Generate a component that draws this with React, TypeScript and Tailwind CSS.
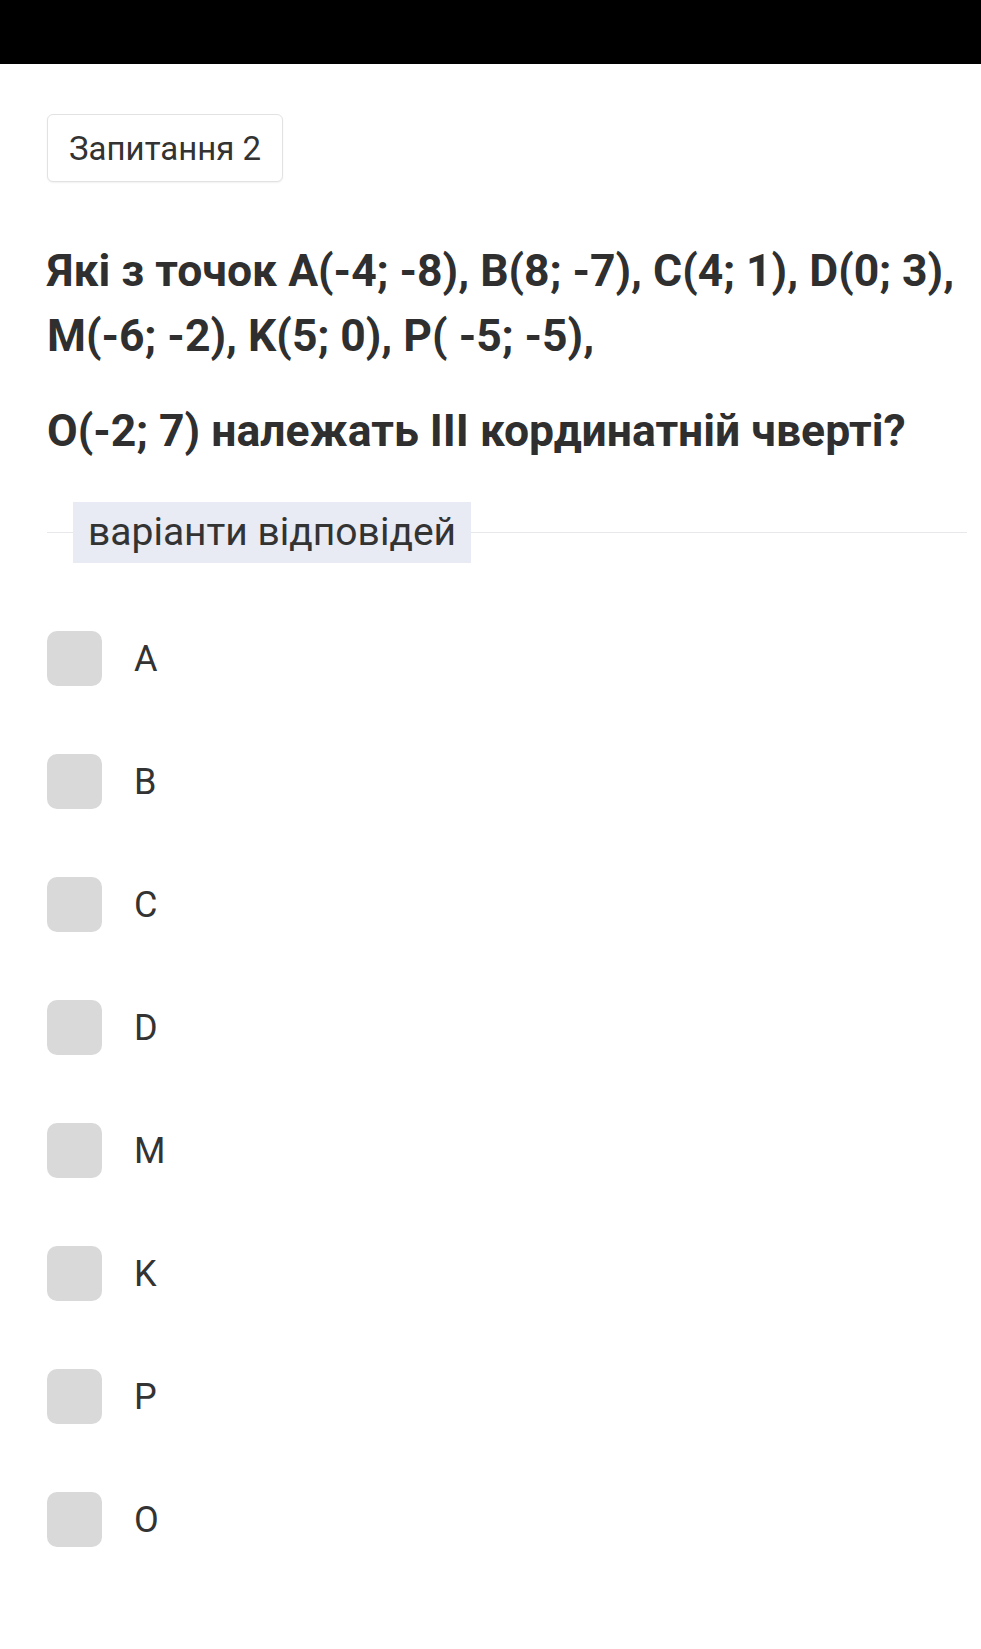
import React from 'react';

const options = ['A', 'B', 'C', 'D', 'M', 'K', 'P', 'O'];

const App: React.FC = () => {
  return (
    <div className="min-h-[1649px] w-full bg-white text-[#333333]" style={{ fontFamily: 'Roboto, "Noto Sans", sans-serif' }}>
      {/* status bar */}
      <div className="h-[64px] w-full bg-black"></div>

      <div className="pl-[47px] pr-[14px]">
        {/* question badge */}
        <div className="mt-[50px] inline-flex h-[68px] items-center rounded-md border border-[#e2e2e2] bg-white px-[21px] shadow-[0_1px_2px_rgba(0,0,0,0.06)]">
          <span className="text-[33px] leading-none text-[#333]">Запитання 2</span>
        </div>

        {/* question text */}
        <div className="mt-[57px] text-[44.5px] font-bold leading-[65px] text-[#2f2f2f]">
          <p>Які з точок A(-4; -8), B(8; -7), C(4; 1), D(0; 3), M(-6; -2), K(5; 0), P( -5; -5),</p>
          <p className="mt-[30px]">O(-2; 7) належать III кординатній чверті?</p>
        </div>

        {/* answers header */}
        <div className="mt-[38px] flex items-center">
          <div className="h-px w-[26px] bg-[#e6e8ec]"></div>
          <div className="flex h-[61px] items-center bg-[#e8eaf4] px-[15px]">
            <span className="text-[39px] leading-none text-[#333]">варіанти відповідей</span>
          </div>
          <div className="h-px flex-1 bg-[#e6e8ec]"></div>
        </div>

        {/* options */}
        <div className="mt-[68px] flex flex-col gap-[68px]">
          {options.map((o) => (
            <div key={o} className="flex items-center">
              <div className="h-[55px] w-[55px] rounded-[10px] bg-[#d9d9d9]"></div>
              <span className="ml-[32px] text-[36px] leading-none text-[#333]">{o}</span>
            </div>
          ))}
        </div>
      </div>
    </div>
  );
};

export default App;
